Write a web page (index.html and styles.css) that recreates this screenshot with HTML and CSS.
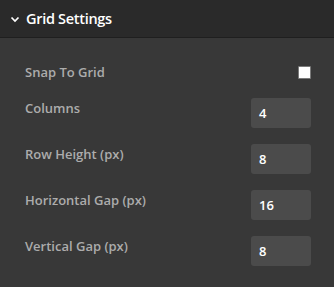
FILE: index.html
```html
<!DOCTYPE html>
<html>
<head>
<meta charset="utf-8">
<link rel="stylesheet" href="styles.css">
</head>
<body>
<div class="panel">
  <div class="panel-header">
    <svg class="chevron" width="10" height="7" viewBox="0 0 10 7"><path d="M1.5 1.5 L5 5 L8.5 1.5" fill="none" stroke="#ffffff" stroke-width="1.7"/></svg>
    <span class="title">Grid Settings</span>
  </div>
  <div class="panel-body">
    <div class="row row-check">
      <span class="label">Snap To Grid</span>
      <span class="checkbox"></span>
    </div>
    <div class="row">
      <span class="label">Columns</span>
      <span class="input">4</span>
    </div>
    <div class="row">
      <span class="label">Row Height (px)</span>
      <span class="input">8</span>
    </div>
    <div class="row">
      <span class="label">Horizontal Gap (px)</span>
      <span class="input">16</span>
    </div>
    <div class="row">
      <span class="label">Vertical Gap (px)</span>
      <span class="input">8</span>
    </div>
  </div>
</div>
</body>
</html>
```
FILE: styles.css
```css
html, body {
  margin: 0;
  padding: 0;
  background: #383838;
}
body {
  font-family: "Open Sans", "Liberation Sans", sans-serif;
  width: 334px;
  height: 287px;
  overflow: hidden;
}
.panel-header {
  background: #2a2a2a;
  border-bottom: 1px solid #1f1f1f;
  display: flex;
  align-items: center;
  padding-left: 10px;
  box-sizing: border-box;
  height: 38px;
}
.chevron {
  margin-right: 6px;
  margin-top: 1px;
}
.title {
  color: #ffffff;
  font-weight: 600;
  font-size: 14.5px;
  letter-spacing: -0.3px;
}
.panel-body {
  padding: 25px 23px 0 25px;
  display: flex;
  flex-direction: column;
  gap: 16px;
}
.row {
  display: flex;
  justify-content: space-between;
  align-items: flex-start;
}
.row-check {
  align-items: center;
  height: 19px;
}
.label {
  color: #acacac;
  font-size: 13px;
  font-weight: 600;
  line-height: 21px;
}
.checkbox {
  width: 11px;
  height: 11px;
  background: #ffffff;
  border: 1px solid #7a7a7a;
  border-radius: 1px;
}
.input {
  width: 60px;
  height: 30px;
  box-sizing: border-box;
  background: #4b4b4b;
  border-radius: 3px;
  color: #ffffff;
  font-size: 13px;
  font-weight: 600;
  line-height: 30px;
  padding-left: 8px;
}
```
